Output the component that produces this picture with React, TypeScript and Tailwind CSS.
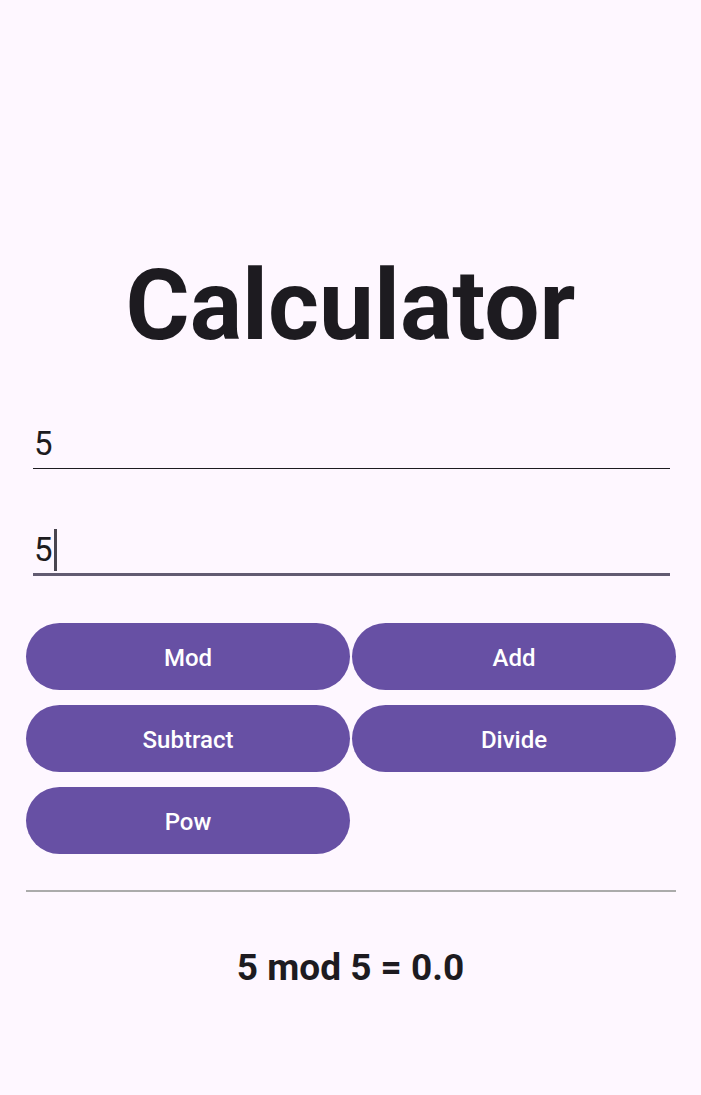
import React from "react";

export default function App() {
  const btn =
    "h-[67px] rounded-full bg-[#6750A4] text-white text-[24px] font-medium flex items-center justify-center pt-[3px]";
  return (
    <div
      className="w-[701px] h-[1095px] bg-[#FEF7FF] text-[#1D1B20] flex flex-col"
      style={{ fontFamily: "Roboto, 'Noto Sans', sans-serif" }}
    >
      <div className="pt-[246px] flex justify-center">
        <h1 className="text-[98px] leading-[120px] font-bold">Calculator</h1>
      </div>
      <div className="pl-[33px] pr-[31px] pt-[52px] flex flex-col">
        <div className="h-[51px] flex items-end border-b-[1.5px] border-[#1D1B20]">
          <span className="text-[33px] leading-[40px] pl-[1px] pb-[4px]">5</span>
        </div>
        <div className="mt-[56px] h-[51px] flex items-end border-b-[3px] border-[#625B71]">
          <span className="text-[33px] leading-[40px] pl-[1px] pb-[2px] flex items-center">
            5<span className="inline-block w-[3px] h-[42px] bg-[#49454F] ml-[1px]" />
          </span>
        </div>
      </div>
      <div className="pl-[26px] pr-[25px] pt-[47px] grid grid-cols-2 gap-x-[2px] gap-y-[15px]">
        <div className={btn}>Mod</div>
        <div className={btn}>Add</div>
        <div className={btn}>Subtract</div>
        <div className={btn}>Divide</div>
        <div className={btn}>Pow</div>
      </div>
      <div className="ml-[26px] mr-[25px] mt-[36px] h-[2px] bg-[#ABABAB]" />
      <div className="pt-[51px] flex justify-center">
        <span className="text-[37px] leading-[50px] font-bold">5 mod 5 = 0.0</span>
      </div>
    </div>
  );
}
